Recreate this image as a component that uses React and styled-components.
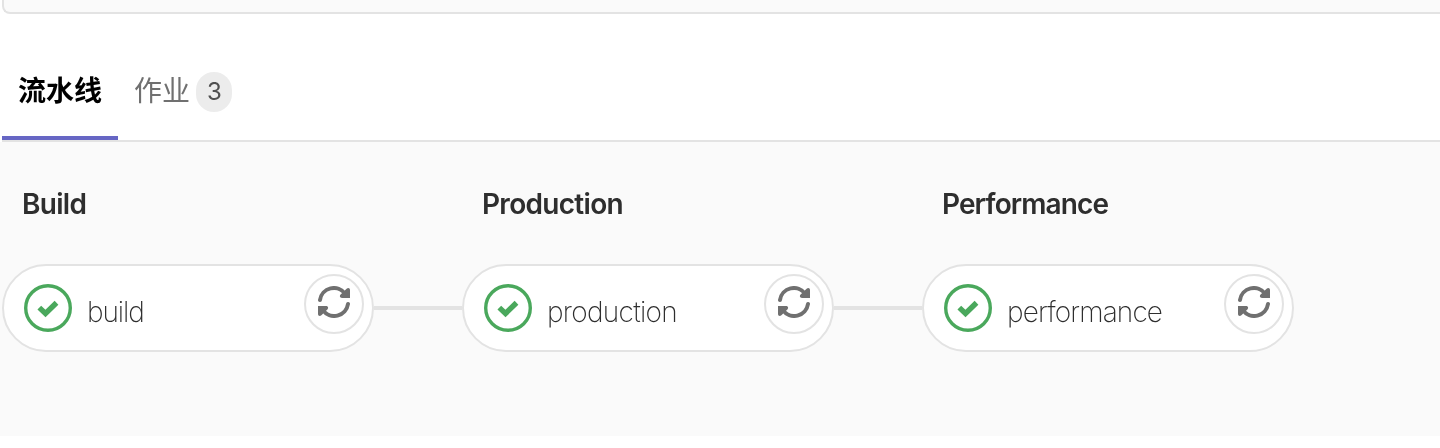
import React from 'react';
import styled, { createGlobalStyle } from 'styled-components';

const GlobalStyle = createGlobalStyle`
  *, *::before, *::after { box-sizing: border-box; }
  body {
    margin: 0;
    background: #fff;
    font-family: Inter, "Noto Sans CJK SC", sans-serif;
    font-size: 28px;
    color: #2e2e2e;
  }
`;

const Page = styled.main`
  height: 448px;
  overflow: hidden;
  will-change: transform;
`;

const InfoWell = styled.div`
  height: 14px;
  margin-left: 2px;
  background: #fafafa;
  border: solid #e3e3e3;
  border-width: 0 0 2px 2px;
  border-bottom-left-radius: 8px;
`;

const Tabs = styled.nav`
  display: flex;
  height: 128px;
  margin-left: 2px;
  padding-top: 50px;
  border-bottom: 2px solid #e3e3e3;
`;

const Tab = styled.a`
  display: flex;
  align-items: flex-start;
  height: 76px;
  padding: 7px 16px 0;
  line-height: 40px;
  color: ${({ $active }) => ($active ? '#000' : '#707070')};
  font-weight: ${({ $active }) => ($active ? 700 : 400)};
  border-bottom: 4px solid ${({ $active }) => ($active ? '#6666c4' : 'transparent')};
`;

const Badge = styled.span`
  width: 36px;
  height: 40px;
  margin: 1px 0 0 6px;
  padding-left: 1px;
  border-radius: 18px;
  background: #ececec;
  color: #505050;
  font-size: 24px;
  line-height: 40px;
  text-align: center;
`;

const Graph = styled.section`
  display: flex;
  height: 294px;
  padding: 40px 0 0 2px;
  background: #fafafa;
`;

const Stage = styled.div`
  width: 460px;
`;

const StageName = styled.h2`
  margin: 0 0 38px;
  padding-left: 20px;
  font-size: 28px;
  font-weight: 600;
  line-height: 44px;
  letter-spacing: ${({ $tracking }) => $tracking}px;
`;

const JobRow = styled.div`
  display: flex;
  align-items: center;
`;

const Job = styled.div`
  display: flex;
  flex: none;
  align-items: center;
  width: 372px;
  height: 88px;
  padding: 0 8px 0 20px;
  background: #fff;
  border: 2px solid #e3e3e3;
  border-radius: 44px;
`;

const JobName = styled.span`
  flex: 1;
  margin: 8px 0 0 15px;
  font-weight: 200;
  line-height: 40px;
  letter-spacing: ${({ $tracking }) => $tracking}px;
`;

const RetryButton = styled.button`
  display: grid;
  place-items: center;
  width: 60px;
  height: 60px;
  margin-bottom: 8px;
  padding: 0 0 4px;
  background: #fff;
  border: 2px solid #e3e3e3;
  border-radius: 50%;
`;

const Connector = styled.div`
  flex: 1;
  height: 4px;
  background: #e3e3e3;
`;

const PassedIcon = () => (
  <svg width="48" height="48" viewBox="0 0 48 48" fill="none" stroke="#4aa85c">
    <circle cx="24" cy="24" r="22.3" strokeWidth="3.4" />
    <path d="M15.3 23.6 L21.5 29.5 L32.5 18.8" strokeWidth="5.4" />
  </svg>
);

const RetryIcon = () => (
  <svg width="32" height="32" viewBox="0 0 32 32">
    <g fill="none" stroke="#707070" strokeWidth="4" strokeLinecap="round">
      <path d="M2 14 A14 14 0 0 1 27.2 7.8" />
      <path d="M30 18 A14 14 0 0 1 4.8 24.2" />
    </g>
    <g fill="#707070">
      <path d="M32 12 V4 C32 2 30 1.4 28.6 2.8 L22.6 8.6 C21.2 10.2 22 12 24 12 Z" />
      <path d="M0 20 V28 C0 30 2 30.6 3.4 29.2 L9.4 23.4 C10.8 21.8 10 20 8 20 Z" />
    </g>
  </svg>
);

const stages = [
  { title: 'Build', job: 'build', titleTracking: -0.7, jobTracking: -1.1 },
  { title: 'Production', job: 'production', titleTracking: -0.7, jobTracking: -0.7 },
  { title: 'Performance', job: 'performance', titleTracking: -0.9, jobTracking: -0.85 },
];

export default function App() {
  return (
    <Page>
      <GlobalStyle />
      <InfoWell />
      <Tabs>
        <Tab $active>流水线</Tab>
        <Tab>
          作业<Badge>3</Badge>
        </Tab>
      </Tabs>
      <Graph>
        {stages.map((stage, i) => (
          <Stage key={stage.job}>
            <StageName $tracking={stage.titleTracking}>{stage.title}</StageName>
            <JobRow>
              <Job>
                <PassedIcon />
                <JobName $tracking={stage.jobTracking}>{stage.job}</JobName>
                <RetryButton aria-label="Retry">
                  <RetryIcon />
                </RetryButton>
              </Job>
              {i < stages.length - 1 && <Connector />}
            </JobRow>
          </Stage>
        ))}
      </Graph>
    </Page>
  );
}
